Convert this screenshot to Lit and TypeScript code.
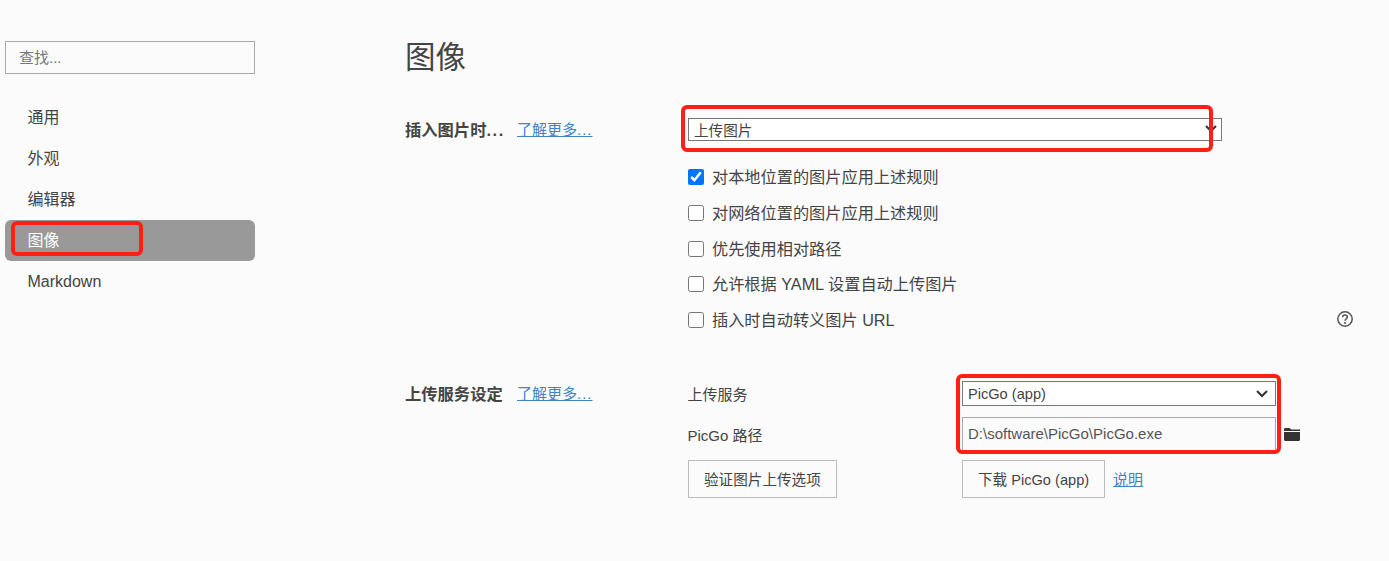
import { LitElement, html, css } from "lit";
import { customElement } from "lit/decorators.js";

const chevron = html`<svg class="chev" width="12" height="8" viewBox="0 0 12 8"><path d="M1 1l5 5 5-5" fill="none" stroke="#333" stroke-width="2"/></svg>`;

@customElement("app-root")
export class AppRoot extends LitElement {
  static styles = css`
    :host {
      display: block;
      position: relative;
      width: 1389px;
      height: 561px;
      overflow: hidden;
      background: #fbfbfb;
      color: #444;
      font-family: "Liberation Sans", "Noto Sans CJK SC", sans-serif;
      font-size: 16px;
    }
    * { box-sizing: border-box; }
    .page { display: flex; height: 100%; padding-left: 5px; }
    .side { width: 250px; padding-top: 41px; flex: none; }
    .search {
      display: block; width: 100%; height: 33px; padding: 0 13px;
      border: 1px solid #aaa; background: transparent; font: inherit; font-size: 15px; outline: none;
    }
    .search::placeholder { color: #777; }
    .nav { margin-top: 23px; }
    .nav div { height: 41px; line-height: 41px; padding-left: 22.5px; border-radius: 6px; }
    .nav .on { background: #999; color: #fff; }
    .main { margin-left: 150px; width: 949px; padding-top: 36px; }
    h1 { margin: 0; font-size: 30.5px; font-weight: 400; line-height: 42px; height: 42px; color: #444; }
    .sec { display: grid; grid-template-columns: 283px 1fr; }
    .sec1 { margin-top: 40px; }
    .sec2 { margin-top: 52px; }
    .head { display: flex; font-weight: 700; font-size: 16.3px; line-height: 24px; color: #444; }
    .head > span { width: 112px; flex: none; white-space: nowrap; }
    .head a { font-weight: 400; font-size: 15px; }
    .dots { letter-spacing: 1px; }
    .head > span .dots { letter-spacing: 1.6px; }
    a { color: #4183c4; text-decoration: underline; }
    .sel {
      display: flex; align-items: center; justify-content: space-between;
      border: 1px solid #777; background: #fff; font-size: 14.6px; color: #444;
    }
    .sel1 { width: 534px; height: 23px; padding: 0 5px 1px; }
    .sel1 .chev { margin-right: -1px; }
    .sel2 { height: 25px; padding: 0 5px; margin-top: -1px; }
    .sel2 .chev { margin-right: 2px; }
    .checks { margin-top: 26px; display: flex; flex-direction: column; gap: 15.75px; }
    .check { display: flex; align-items: center; height: 20px; line-height: 20px; font-size: 16.2px; }
    .check input { width: 16px; height: 16px; margin: 0 8px 0 0; accent-color: #0075ff; flex: none; }
    .help { margin-left: auto; flex: none; margin-top: -3px; }
    .form { display: grid; grid-template-columns: 274px 314px 24px; row-gap: 11px; align-items: center; font-size: 15px; }
    .form .lab { margin-left: -0.5px; margin-top: -1px; }
    .path {
      height: 35px; width: 100%; padding: 0 5px 2px; border: 1px solid #aaa; background: transparent;
      font: inherit; font-size: 15px; color: #555; outline: none;
    }
    .folder { margin-left: 8px; display: block; margin-top: -1px; }
    .btn {
      height: 38px; border: 1px solid #bbb; background: transparent; font: inherit; font-size: 14.6px; color: #444;
      padding: 0 15px 2px; display: inline-flex; align-items: center;
    }
    .btnrow { display: flex; align-items: center; gap: 9px; margin-top: -3px; }
    .btnrow a { margin-top: -2px; margin-left: -1px; }
    .form .b1 { margin-top: -3px; justify-self: start; }
    .mark {
      position: absolute; border: 4px solid #ff2015; border-radius: 6px; pointer-events: none;
    }
    .m1 { left: 11px; top: 221px; width: 132px; height: 35px; }
    .m2 { left: 681px; top: 105px; width: 532px; height: 47px; }
    .m3 { left: 956px; top: 374px; width: 325px; height: 80px; }
  `;

  render() {
    const rules = ["对本地位置的图片应用上述规则", "对网络位置的图片应用上述规则", "优先使用相对路径", "允许根据 YAML 设置自动上传图片"];
    const more = html`<a>了解更多<span class="dots">...</span></a>`;
    return html`
      <div class="page">
        <aside class="side">
          <input class="search" placeholder="查找..." />
          <nav class="nav">
            <div>通用</div><div>外观</div><div>编辑器</div><div class="on">图像</div><div>Markdown</div>
          </nav>
        </aside>
        <main class="main">
          <h1>图像</h1>
          <section class="sec sec1">
            <div class="head"><span>插入图片时<span class="dots">...</span></span>${more}</div>
            <div>
              <div class="sel sel1"><span>上传图片</span>${chevron}</div>
              <div class="checks">
                ${rules.map((r, i) => html`<label class="check"><input type="checkbox" ?checked=${i === 0} />${r}</label>`)}
                <label class="check"><input type="checkbox" />插入时自动转义图片 URL
                  <svg class="help" width="18" height="18" viewBox="0 0 18 18"><circle cx="9" cy="9" r="7.2" fill="none" stroke="#555" stroke-width="1.5"/><path d="M6.7 7.2c0-1.3 1-2.2 2.3-2.2s2.3.9 2.3 2.1c0 1.8-2.3 1.8-2.3 3.6" fill="none" stroke="#555" stroke-width="1.5"/><circle cx="9" cy="12.9" r="1" fill="#555"/></svg>
                </label>
              </div>
            </div>
          </section>
          <section class="sec sec2">
            <div class="head"><span>上传服务设定</span>${more}</div>
            <div class="form">
              <span class="lab">上传服务</span>
              <div class="sel sel2"><span>PicGo (app)</span>${chevron}</div>
              <span></span>
              <span class="lab">PicGo 路径</span>
              <input class="path" value="D:\\software\\PicGo\\PicGo.exe" />
              <svg class="folder" width="16" height="13" viewBox="0 0 16 13"><path d="M0 1.5C0 .7.6 0 1.4 0h4.2l1.6 1.5H16V3H0zM0 4h16v7.500c0 .8-.6 1.500-1.400 1.500H1.400C.6 13 0 12.300 0 11.500z" fill="#333"/></svg>
              <button class="btn b1">验证图片上传选项</button>
              <div class="btnrow"><button class="btn">下载 PicGo (app)</button><a>说明</a></div>
              <span></span>
            </div>
          </section>
        </main>
      </div>
      <div class="mark m1"></div>
      <div class="mark m2"></div>
      <div class="mark m3"></div>
    `;
  }
}
